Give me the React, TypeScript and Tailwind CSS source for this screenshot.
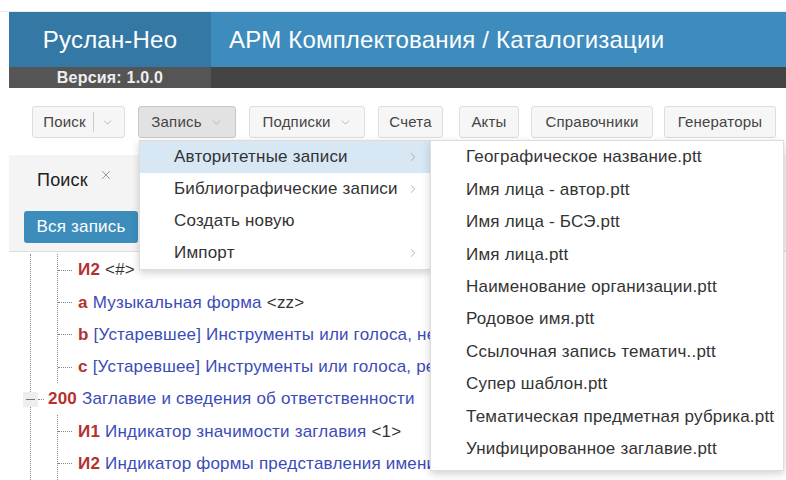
import { ChevronDown, ChevronRight, X } from "lucide-react"

const toolbar = [
  { label: "Поиск", split: true, w: "w-[93px]", ml: "ml-0" },
  { label: "Запись", caret: true, active: true, w: "w-[98px]", ml: "ml-[13px]" },
  { label: "Подписки", caret: true, w: "w-[116px]", ml: "ml-[13px]" },
  { label: "Счета", w: "w-[65px]", ml: "ml-[13px]" },
  { label: "Акты", w: "w-[60px]", ml: "ml-[16px]" },
  { label: "Справочники", w: "w-[122px]", ml: "ml-[12px]" },
  { label: "Генераторы", w: "w-[112px]", ml: "ml-[11px]" },
]

const recordMenu = [
  { label: "Авторитетные записи", sub: true, active: true },
  { label: "Библиографические записи", sub: true },
  { label: "Создать новую" },
  { label: "Импорт", sub: true },
]

const templates = [
  "Географическое название.ptt",
  "Имя лица - автор.ptt",
  "Имя лица - БСЭ.ptt",
  "Имя лица.ptt",
  "Наименование организации.ptt",
  "Родовое имя.ptt",
  "Ссылочная запись тематич..ptt",
  "Супер шаблон.ptt",
  "Тематическая предметная рубрика.ptt",
  "Унифицированное заглавие.ptt",
]

function Leaf({ code, text, value }: { code: string; text?: string; value?: string }) {
  return (
    <div className="flex h-[32.3px] items-center">
      <span className="mr-[6px] w-[14px] shrink-0 border-t border-dotted border-[#888]" />
      <span className="font-bold text-[#b5302f]">{code}</span>
      {text && <span className="ml-[5px] whitespace-nowrap text-[#3b4bb8]">{text}</span>}
      {value && <span className="ml-[5px] whitespace-nowrap text-[#333]">{value}</span>}
    </div>
  )
}

export default function App() {
  return (
    <div className="relative h-[480px] w-[786px] overflow-hidden bg-white font-['Liberation_Sans',Arial,sans-serif] text-[17px] tracking-[0.2px]">
      <div className="h-[12px] border-b border-[#ececec]" />

      {/* header */}
      <header className="ml-[9px]">
        <div className="flex h-[55px]">
          <div className="flex w-[202px] items-center justify-center bg-[#3479a6] text-[24px] text-white">
            Руслан-Нео
          </div>
          <div className="flex flex-1 items-center bg-[#3d8cbd] pl-[18px] text-[24px] text-white">
            АРМ Комплектования / Каталогизации
          </div>
        </div>
        <div className="flex h-[21px]">
          <div className="flex w-[202px] items-center justify-center bg-[#555] text-[16px] font-bold text-[#eee]">
            Версия: 1.0.0
          </div>
          <div className="flex-1 bg-[#444]" />
        </div>
      </header>

      {/* toolbar */}
      <div className="mt-[18px] flex pl-[32px]">
        {toolbar.map((b) => (
          <div
            key={b.label}
            className={`flex h-[32px] items-center justify-center rounded-[3px] border text-[15px] text-[#444] ${b.w} ${b.ml} ${
              b.active ? "border-[#c8c8c8] bg-[#e2e2e2]" : "border-[#ddd] bg-[#f6f6f6]"
            }`}
          >
            <span>{b.label}</span>
            {b.split && (
              <>
                <span className="mx-[7px] h-[20px] border-l border-[#ccc]" />
                <ChevronDown className="h-[13px] w-[13px] text-[#aaa]" strokeWidth={1.5} />
              </>
            )}
            {b.caret && <ChevronDown className="ml-[8px] h-[13px] w-[13px] text-[#aaa]" strokeWidth={1.5} />}
          </div>
        ))}
      </div>

      {/* search panel */}
      <section className="ml-[9px] mt-[17px] h-[97px] border-b border-[#ddd] bg-[#f4f4f4]">
        <div className="flex h-[36px] items-end pl-[28px]">
          <span className="text-[18px] leading-[22px] text-[#222]">Поиск</span>
          <X className="mb-[9px] ml-[11px] h-[14px] w-[14px] text-[#888]" strokeWidth={1.5} />
        </div>
        <div className="ml-[15px] mt-[20px] flex h-[32px] w-[114px] items-center justify-center rounded-[3px] bg-[#3c8dbc] text-[17px] text-white">
          Вся запись
        </div>
      </section>

      {/* record tree */}
      <div className="relative ml-[30px] mt-[2px] border-l border-dotted border-[#888]">
        <div className="ml-[26px] h-[129px] border-l border-dotted border-[#888]">
          <Leaf code="И2" value="<#>" />
          <Leaf code="a" text="Музыкальная форма" value="<zz>" />
          <Leaf code="b" text="[Устаревшее] Инструменты или голоса, не указанные в коде" />
          <Leaf code="c" text="[Устаревшее] Инструменты или голоса, решение" />
        </div>
        <div className="-ml-[8px] flex h-[32.3px] items-center">
          <span className="flex h-[15px] w-[15px] items-center justify-center bg-[#eee]">
            <span className="w-[9px] border-t border-[#777]" />
          </span>
          <span className="mr-[4px] w-[6px] border-t border-dotted border-[#888]" />
          <span className="font-bold text-[#b5302f]">200</span>
          <span className="ml-[5px] whitespace-nowrap text-[#3b4bb8]">Заглавие и сведения об ответственности</span>
        </div>
        <div className="ml-[26px] border-l border-dotted border-[#888]">
          <Leaf code="И1" text="Индикатор значимости заглавия" value="<1>" />
          <Leaf code="И2" text="Индикатор формы представления имени" value="<#>" />
        </div>
      </div>

      {/* Запись dropdown */}
      <div className="absolute left-[139px] top-[140px] w-[292px] border border-[#ddd] bg-white shadow-[0_3px_8px_rgba(0,0,0,0.18)]">
        {recordMenu.map((m) => (
          <div
            key={m.label}
            className={`flex h-[32px] items-center pl-[34px] pr-[10px] text-[#333] ${m.active ? "bg-[#d8e7f4]" : ""}`}
          >
            <span className="flex-1 whitespace-nowrap">{m.label}</span>
            {m.sub && <ChevronRight className="h-[14px] w-[14px] text-[#999]" strokeWidth={1.3} />}
          </div>
        ))}
      </div>

      {/* authority templates submenu */}
      <div className="absolute left-[430px] top-[140px] w-[354px] border border-[#ddd] bg-white pb-[5px] shadow-[0_3px_8px_rgba(0,0,0,0.18)]">
        {templates.map((t) => (
          <div key={t} className="flex h-[32.4px] items-center whitespace-nowrap pl-[35px] text-[#333]">
            {t}
          </div>
        ))}
      </div>
    </div>
  )
}
